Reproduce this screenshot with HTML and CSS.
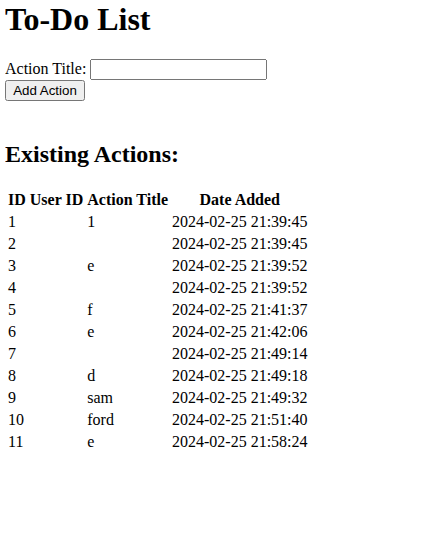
FILE: index.html
```html
<!DOCTYPE html>
<html>
<head>
<meta charset="utf-8">
<title>To-Do List</title>
<link rel="stylesheet" href="styles.css">
</head>
<body class="page">
<h1 class="title">To-Do List</h1>
<form class="add-form">
<label class="field-label" for="title">Action Title:</label> <input class="field-input" type="text" id="title" name="title"><br>
<button class="add-btn" type="button">Add Action</button>
</form>
<h2 class="subtitle">Existing Actions:</h2>
<table class="actions">
<thead>
<tr><th>ID</th><th>User ID</th><th>Action Title</th><th>Date Added</th></tr>
</thead>
<tbody>
<tr><td>1</td><td></td><td>1</td><td>2024-02-25 21:39:45</td></tr>
<tr><td>2</td><td></td><td></td><td>2024-02-25 21:39:45</td></tr>
<tr><td>3</td><td></td><td>e</td><td>2024-02-25 21:39:52</td></tr>
<tr><td>4</td><td></td><td></td><td>2024-02-25 21:39:52</td></tr>
<tr><td>5</td><td></td><td>f</td><td>2024-02-25 21:41:37</td></tr>
<tr><td>6</td><td></td><td>e</td><td>2024-02-25 21:42:06</td></tr>
<tr><td>7</td><td></td><td></td><td>2024-02-25 21:49:14</td></tr>
<tr><td>8</td><td></td><td>d</td><td>2024-02-25 21:49:18</td></tr>
<tr><td>9</td><td></td><td>sam</td><td>2024-02-25 21:49:32</td></tr>
<tr><td>10</td><td></td><td>ford</td><td>2024-02-25 21:51:40</td></tr>
<tr><td>11</td><td></td><td>e</td><td>2024-02-25 21:58:24</td></tr>
</tbody>
</table>
</body>
</html>
```
FILE: styles.css
```css
html, body {
  background: #fff;
}
.page {
  margin: 1px 0 0 5px;
  font-family: "Liberation Serif", "Times New Roman", serif;
  font-size: 16px;
  color: #000;
}
.title {
  font-size: 32px;
  font-weight: bold;
  margin: 0 0 21.44px;
}
.add-form {
  margin: 0;
  padding-bottom: 20px;
}
.field-input, .add-btn {
  font-family: "Liberation Sans", Arial, sans-serif;
  font-size: 13.333px;
}
.field-input {
  box-sizing: border-box;
  width: 177px;
  height: 21px;
}
.add-btn {
  box-sizing: border-box;
  height: 21px;
  width: 80px;
  padding: 1px 6px;
}
.subtitle {
  font-size: 24px;
  font-weight: bold;
  margin: 19.92px 0;
}
.actions {
  border-spacing: 2px;
}
.actions th, .actions td {
  padding: 1px;
}
```
